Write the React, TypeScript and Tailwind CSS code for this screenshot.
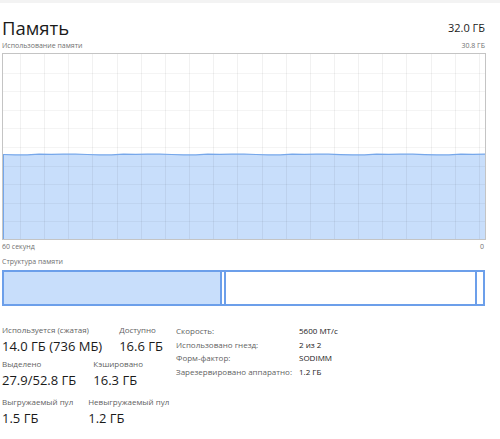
import React from "react";

const W = 482;
const H = 185;

function Chart() {
  const vx: number[] = [];
  for (let x = 17; x < W; x += 24.15) vx.push(Math.round(x) + 0.5);
  const hy: number[] = [];
  for (let i = 1; i < 10; i++) hy.push(Math.round(i * 18.6) + 0.5);
  const top = 100.5;
  const pts: [number, number][] = [];
  for (let i = 0; i <= 40; i++) {
    const x = (i / 40) * W;
    const y = top + Math.sin(i * 0.9) * 0.4 + (i % 7 === 3 ? -0.5 : 0);
    pts.push([x, y]);
  }
  const line = pts.map((p, i) => `${i ? "L" : "M"}${p[0].toFixed(1)} ${p[1].toFixed(2)}`).join(" ");
  const area = `${line} L${W} ${H} L0 ${H} Z`;
  return (
    <svg width={W} height={H} className="block">
      <path d={area} fill="#c8defb" />
      {vx.map((x) => (
        <line key={x} x1={x} y1={0} x2={x} y2={H} stroke="#000" strokeOpacity={0.055} strokeWidth={1} />
      ))}
      {hy.map((y) => (
        <line key={y} x1={0} y1={y} x2={W} y2={y} stroke="#000" strokeOpacity={0.045} strokeWidth={1} />
      ))}
      <path d={line} fill="none" stroke="#76a7ea" strokeWidth={1.2} />
      <line x1={0.5} y1={top} x2={0.5} y2={H} stroke="#76a7ea" strokeWidth={1} />
    </svg>
  );
}

function Stat({ label, value }: { label: string; value: string }) {
  return (
    <div className="flex flex-col whitespace-nowrap">
      <div className="text-[8px] leading-[13px] text-[#5f5f5f]">{label}</div>
      <div className="text-[13px] leading-[20px] text-[#1a1a1a]">{value}</div>
    </div>
  );
}

export default function App() {
  return (
    <div
      className="w-[500px] h-[439px] bg-white overflow-hidden"
      style={{ fontFamily: '"Open Sans", "Noto Sans", sans-serif' }}
    >
      <div className="h-[3px] bg-[#f3f3f3]" />
      <div className="pl-[2px] pr-[15px]">
        <div className="flex items-end justify-between h-[36px]">
          <div className="text-[18.5px] leading-[24px] text-[#1a1a1a] mb-[-1px]">Память</div>
          <div className="text-[11px] leading-[14px] text-[#1a1a1a] mb-[4px]">32.0 ГБ</div>
        </div>
        <div className="flex justify-between mt-[2px] h-[10px] text-[7px] leading-[10px] text-[#707070] whitespace-nowrap">
          <span>Использование памяти</span>
          <span>30.8 ГБ</span>
        </div>
        <div className="mt-[2px] w-[484px] border border-[#c4c4c4]">
          <Chart />
        </div>
        <div className="flex justify-between mt-[1px] h-[12px] text-[7px] leading-[12px] text-[#707070]">
          <span>60 секунд</span>
          <span className="mr-[1px]">0</span>
        </div>
        <div className="mt-[3px] h-[11px] text-[7px] leading-[11px] text-[#707070]">Структура памяти</div>
        <div className="mt-[3px] flex w-[483px] h-[36px]">
          <div className="w-[220px] border-2 border-[#6c9fea] bg-[#c8defb]" />
          <div className="w-[4px] border-y-2 border-r-2 border-[#6c9fea]" />
          <div className="flex-1 border-y-2 border-r-2 border-[#6c9fea]" />
          <div className="w-[8px] border-y-2 border-r-2 border-[#6c9fea]" />
        </div>
        <div className="mt-[17px] flex items-start">
          <div className="w-[174px] flex flex-col">
            <div className="flex gap-[17px]">
              <Stat label="Используется (сжатая)" value="14.0 ГБ (736 МБ)" />
              <Stat label="Доступно" value="16.6 ГБ" />
            </div>
            <div className="flex gap-[17px] mt-[1px]">
              <Stat label="Выделено" value="27.9/52.8 ГБ" />
              <Stat label="Кэшировано" value="16.3 ГБ" />
            </div>
            <div className="flex gap-[15px] mt-[5px]">
              <Stat label="Выгружаемый пул" value="1.5 ГБ" />
              <Stat label="Невыгружаемый пул" value="1.2 ГБ" />
            </div>
          </div>
          <div className="grid grid-cols-[123px_auto] content-start text-[8px] leading-[13.5px] mt-[1px] whitespace-nowrap">
            <span className="text-[#5f5f5f]">Скорость:</span>
            <span className="text-[#1a1a1a]">5600 MT/с</span>
            <span className="text-[#5f5f5f]">Использовано гнезд:</span>
            <span className="text-[#1a1a1a]">2 из 2</span>
            <span className="text-[#5f5f5f]">Форм-фактор:</span>
            <span className="text-[#1a1a1a]">SODIMM</span>
            <span className="text-[#5f5f5f]">Зарезервировано аппаратно:</span>
            <span className="text-[#1a1a1a]">1.2 ГБ</span>
          </div>
        </div>
      </div>
    </div>
  );
}
